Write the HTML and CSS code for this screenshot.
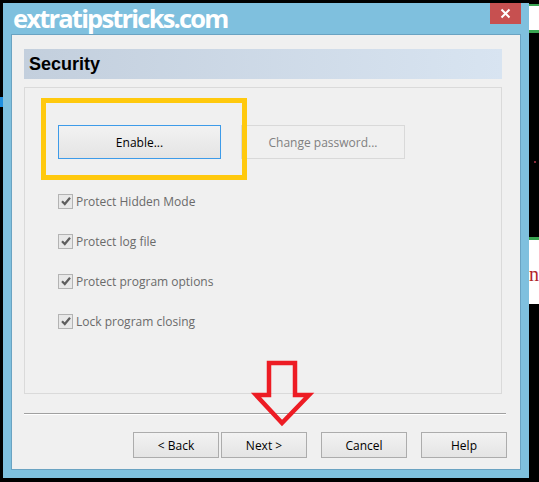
FILE: index.html
```html
<!DOCTYPE html>
<html lang="en">
<head>
    <meta charset="UTF-8">
    <meta name="viewport" content="width=device-width, initial-scale=1.0">
    <title>Security</title>
    <link rel="stylesheet" href="styles.css">
</head>
<body>
    <div class="screen">
        <div class="edge-left"><span class="edge-blue"></span></div>

        <div class="window">
            <div class="titlebar">
                <span class="site">extratipstricks.com</span>
                <button class="close" title="Close">
                    <svg width="11" height="11" viewBox="0 0 11 11">
                        <path d="M1.5 1.5 L9.5 9.5 M9.5 1.5 L1.5 9.5" stroke="#fff" stroke-width="2" fill="none"/>
                    </svg>
                </button>
            </div>

            <div class="client">
                <div class="page-head">Security</div>

                <div class="group">
                    <div class="actions">
                        <button class="btn btn-focus btn-wide">Enable...</button>
                        <button class="btn btn-disabled btn-wide">Change password...</button>
                    </div>

                    <ul class="options">
                        <li><span class="check"><svg width="12" height="12" viewBox="0 0 12 12"><path d="M2 6.2 L4.8 9 L10 2.8" stroke="#5e5e5e" stroke-width="2.2" fill="none"/></svg></span>Protect Hidden Mode</li>
                        <li><span class="check"><svg width="12" height="12" viewBox="0 0 12 12"><path d="M2 6.2 L4.8 9 L10 2.8" stroke="#5e5e5e" stroke-width="2.2" fill="none"/></svg></span>Protect log file</li>
                        <li><span class="check"><svg width="12" height="12" viewBox="0 0 12 12"><path d="M2 6.2 L4.8 9 L10 2.8" stroke="#5e5e5e" stroke-width="2.2" fill="none"/></svg></span>Protect program options</li>
                        <li><span class="check"><svg width="12" height="12" viewBox="0 0 12 12"><path d="M2 6.2 L4.8 9 L10 2.8" stroke="#5e5e5e" stroke-width="2.2" fill="none"/></svg></span>Lock program closing</li>
                    </ul>

                    <!-- yellow annotation box -->
                    <div class="highlight"></div>
                </div>

                <div class="sep"></div>

                <div class="nav">
                    <button class="btn">&lt; Back</button>
                    <button class="btn">Next &gt;</button>
                    <button class="btn btn-gap">Cancel</button>
                    <button class="btn btn-gap">Help</button>
                </div>

                <!-- red annotation arrow -->
                <svg class="arrow" width="66" height="70" viewBox="0 0 66 70">
                    <polygon points="19,3 45,3 45,35 59,35 32,63 6,35 19,35" fill="none" stroke="#ed1c24" stroke-width="4.5" stroke-linejoin="miter"/>
                </svg>
            </div>
        </div>

        <div class="edge-right">
            <div class="tile tile-top"></div>
            <div class="dot"></div>
            <div class="tile tile-mid"><span>n</span></div>
        </div>
    </div>
</body>
</html>
```

FILE: styles.css
```css
body {
    margin: 0;
    padding: 0;
    background-color: #000;
    font-family: "Open Sans", "Liberation Sans", sans-serif;
    font-size: 12px;
}

.screen {
    display: flex;
    width: 539px;
    height: 482px;
    overflow: hidden;
}

.edge-left {
    width: 3px;
    position: relative;
}

.edge-blue {
    display: block;
    margin-top: 97px;
    height: 10px;
    background-color: #1f8fe0;
}

.window {
    width: 526px;
    margin: 3px 0 4px;
    background-color: #7fc0de;
    display: flex;
    flex-direction: column;
}

.titlebar {
    height: 31px;
    display: flex;
    justify-content: space-between;
    align-items: flex-start;
    padding: 0 8px 0 10px;
}

.site {
    color: #fff;
    font-family: "Open Sans", sans-serif;
    font-weight: bold;
    font-size: 25.5px;
    line-height: 30px;
    letter-spacing: -1.8px;
}

.close {
    width: 31px;
    height: 21px;
    border: none;
    padding: 0;
    background-color: #c75050;
    display: flex;
    align-items: center;
    justify-content: center;
}

.client {
    flex: 1;
    margin: 0 8px 8px;
    border: 1px solid #6aa3c2;
    background-color: #f0f0f0;
    position: relative;
    display: flex;
    flex-direction: column;
}

.page-head {
    margin: 14px 18px 0 12px;
    height: 30px;
    line-height: 30px;
    padding-left: 5px;
    background: linear-gradient(to right, #c3cfdd, #d8e4f1);
    font-family: "Liberation Sans", Arial, sans-serif;
    font-weight: bold;
    font-size: 18px;
    color: #000;
}

.group {
    margin: 8px 18px 0 12px;
    height: 305px;
    border: 1px solid #dadada;
    position: relative;
}

.actions {
    display: flex;
    gap: 20px;
    padding: 37px 0 0 33px;
}

.btn {
    height: 26px;
    width: 86px;
    padding: 0;
    border: 1px solid #acacac;
    background: linear-gradient(#f2f2f2, #e4e4e4);
    font-family: "Open Sans", sans-serif;
    font-size: 12px;
    color: #000;
}

.btn-wide {
    width: 164px;
    height: 34px;
}

.btn-focus {
    width: 163px;
    border-color: #3d9be9;
}

.btn-disabled {
    background: #f0f0f0;
    border-color: #d9d9d9;
    color: #808080;
}

.options {
    list-style: none;
    margin: 22px 0 0;
    padding: 0 0 0 33px;
}

.options li {
    height: 40px;
    display: flex;
    align-items: center;
    color: #6a6a6a;
}

.check {
    width: 13px;
    height: 13px;
    border: 1px solid #b3b3b3;
    background-color: #e8e8e8;
    margin-right: 3px;
    display: flex;
    align-items: center;
    justify-content: center;
}

.highlight {
    position: absolute;
    left: 16px;
    top: 10px;
    width: 196px;
    height: 72px;
    border: 5px solid #ffc90e;
}

.sep {
    margin: 19px 14px 0 12px;
    border-top: 1px solid #a0a0a0;
    border-bottom: 1px solid #fff;
}

.nav {
    display: flex;
    justify-content: flex-end;
    gap: 2px;
    margin: 17px 13px 0 0;
}

.btn-gap {
    margin-left: 12px;
}

.arrow {
    position: absolute;
    left: 238px;
    top: 325px;
}

.edge-right {
    width: 10px;
    position: relative;
}

.tile {
    position: absolute;
    left: 0;
    right: 0;
    background-color: #fff;
}

.tile-top {
    top: 4px;
    height: 24px;
    border-top: 2px solid #3aa552;
    border-bottom: 3px solid #3aa552;
}

.tile-mid {
    top: 237px;
    height: 64px;
    border-top: 3px solid #3aa552;
    overflow: hidden;
}

.tile-mid span {
    display: block;
    margin: 24px 0 0 0;
    font-family: "Liberation Serif", serif;
    font-size: 20px;
    line-height: 20px;
    color: #b1252b;
}

.dot {
    position: absolute;
    left: 5px;
    top: 161px;
    width: 2px;
    height: 2px;
    background-color: #8a2a3a;
}
```
